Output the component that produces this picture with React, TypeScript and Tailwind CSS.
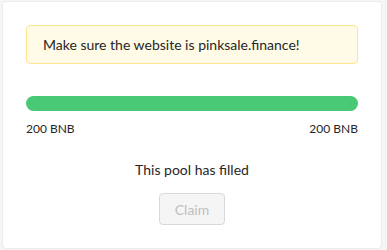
export default function App() {
  return (
    <div className="min-h-[250px] w-[387px] bg-[#f5f5f5] pl-[2px] pr-[5px] pt-[1px]" style={{ fontFamily: 'Lato, "Noto Sans", sans-serif' }}>
      <div className="h-[248px] rounded-[4px] border border-[#ececec] bg-white px-[23px] pt-[23px] text-[#262626]">
        {/* warning notice */}
        <div className="flex h-[39px] items-center rounded-[4px] border border-[#ffe58f] bg-[#fffbe6] px-[16px] text-[14px]">
          Make sure the website is pinksale.finance!
        </div>

        {/* progress */}
        <div className="mt-[32px] h-[15px] w-full rounded-full bg-[#49c976]" />
        <div className="mt-[9px] flex justify-between text-[12px] leading-[18px]">
          <span>200 BNB</span>
          <span>200 BNB</span>
        </div>

        <p className="mt-[21px] text-center text-[14px] leading-[22px]">This pool has filled</p>

        <div className="mt-[12px] flex justify-center">
          <button
            disabled
            className="h-[32px] w-[66px] cursor-not-allowed rounded-[4px] border border-[#d9d9d9] bg-[#f5f5f5] text-[14px] text-[#bfbfbf]"
          >
            Claim
          </button>
        </div>
      </div>
    </div>
  );
}
